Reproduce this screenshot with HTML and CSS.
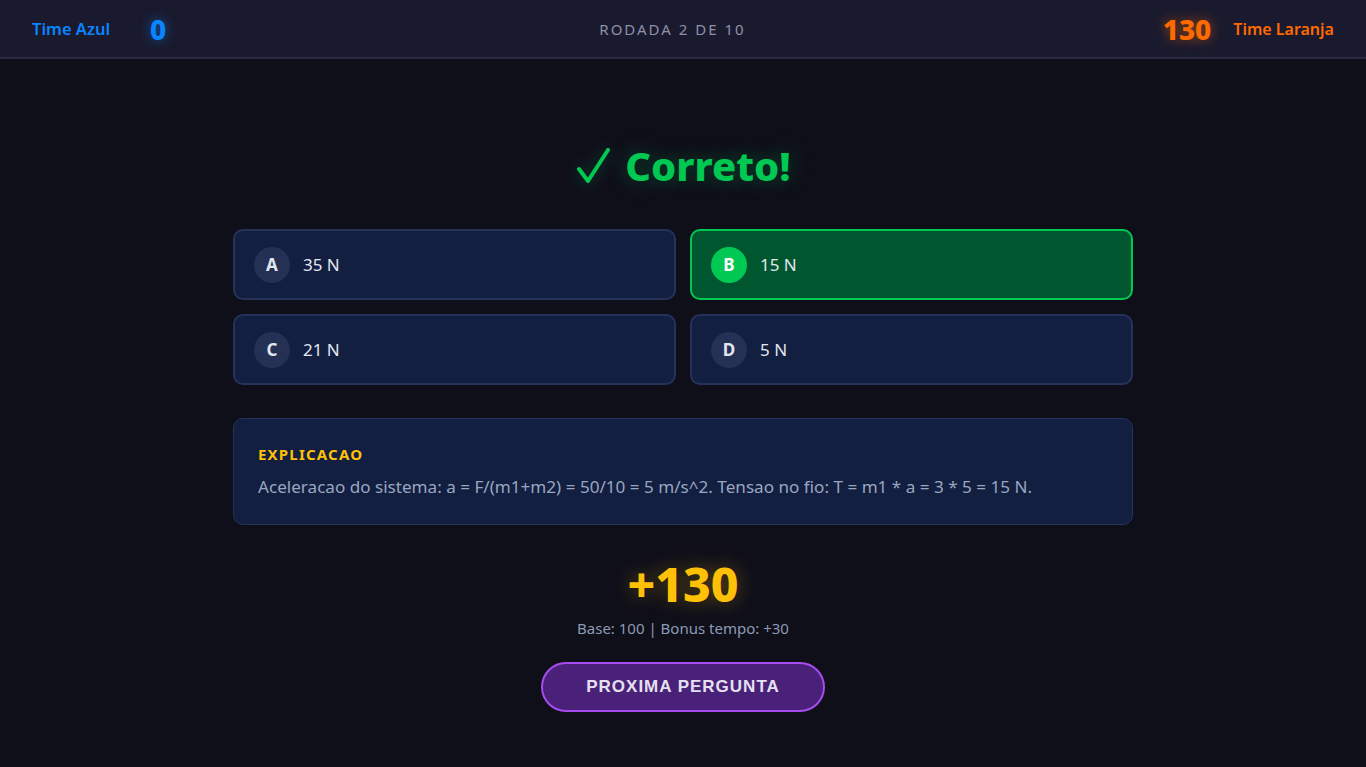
FILE: index.html
```html
<!DOCTYPE html>
<html lang="pt">
<head>
    <meta charset="UTF-8">
    <meta name="viewport" content="width=device-width, initial-scale=1.0">
    <title>Quiz - Resultado</title>
    <link rel="stylesheet" href="styles.css">
</head>
<body>
    <header class="placar">
        <div class="time time-azul">
            <span class="time-nome">Time Azul</span>
            <span class="time-pontos">0</span>
        </div>
        <div class="rodada">RODADA 2 DE 10</div>
        <div class="time time-laranja">
            <span class="time-pontos">130</span>
            <span class="time-nome">Time Laranja</span>
        </div>
    </header>

    <main class="resultado">
        <h1 class="titulo">
            <svg class="check" width="36" height="38" viewBox="0 0 36 38">
                <path d="M4 23 L13 35 L33 4" fill="none" stroke="#00c853" stroke-width="4" stroke-linecap="round" stroke-linejoin="round"/>
            </svg>
            Correto!
        </h1>

        <section class="opcoes">
            <div class="opcao"><span class="letra">A</span><span>35 N</span></div>
            <div class="opcao correta"><span class="letra">B</span><span>15 N</span></div>
            <div class="opcao"><span class="letra">C</span><span>21 N</span></div>
            <div class="opcao"><span class="letra">D</span><span>5 N</span></div>
        </section>

        <section class="explicacao">
            <h2>EXPLICACAO</h2>
            <p>Aceleracao do sistema: a = F/(m1+m2) = 50/10 = 5 m/s^2. Tensao no fio: T = m1 * a = 3 * 5 = 15 N.</p>
        </section>

        <div class="ganho">+130</div>
        <div class="detalhe">Base: 100 | Bonus tempo: +30</div>

        <button class="proxima">PROXIMA PERGUNTA</button>
    </main>
</body>
</html>
```

FILE: styles.css
```css
body {
    font-family: "Noto Sans", "Open Sans", sans-serif;
    margin: 0;
    background-color: #0f0f1a;
    color: #e2e6f0;
    min-height: 100vh;
}
.placar {
    display: flex;
    justify-content: space-between;
    align-items: center;
    height: 57px;
    padding: 0 32px;
    background-color: #1a1a2e;
    border-bottom: 2px solid #2a2a48;
}
.time {
    display: flex;
    align-items: center;
    gap: 24px;
}
.time-nome {
    font-size: 16.5px;
    font-weight: 600;
}
.time-pontos {
    min-width: 48px;
    text-align: center;
    font-size: 28px;
    font-weight: 800;
}
.time-azul {
    color: #0a84ff;
}
.time-azul .time-pontos {
    text-shadow: 0 0 12px rgba(10,132,255,0.6);
}
.time-laranja {
    color: #ff6a00;
    gap: 22px;
}
.time-laranja .time-nome {
    font-size: 16px;
}
.time-laranja .time-pontos {
    text-shadow: 0 0 12px rgba(255,106,0,0.6);
}
.rodada {
    font-size: 15px;
    letter-spacing: 2px;
    color: #8d91a8;
}
.resultado {
    width: 900px;
    margin: 0 auto;
    padding-top: 81px;
    display: flex;
    flex-direction: column;
    align-items: center;
}
.titulo {
    display: flex;
    align-items: center;
    gap: 14px;
    margin: 0 0 37px;
    font-size: 40px;
    font-weight: 800;
    line-height: 52px;
    color: #00c853;
    text-shadow: 0 0 20px rgba(0,200,83,0.35);
}
.check {
    margin-top: -2px;
    filter: drop-shadow(0 0 8px rgba(0,200,83,0.35));
}
.opcoes {
    width: 100%;
    display: grid;
    grid-template-columns: 1fr 1fr;
    gap: 14px;
}
.opcao {
    display: flex;
    align-items: center;
    gap: 13px;
    height: 67px;
    padding: 0 19px;
    background-color: #121f40;
    border: 2px solid #25325a;
    border-radius: 10px;
    font-size: 17px;
    color: #e2e6f0;
}
.letra {
    width: 36px;
    height: 36px;
    border-radius: 50%;
    background-color: #243154;
    display: flex;
    justify-content: center;
    align-items: center;
    font-weight: 700;
    font-size: 17px;
}
.correta {
    background-color: #00572f;
    border-color: #00c853;
}
.correta .letra {
    background-color: #00c853;
    color: #fff;
}
.explicacao {
    width: 100%;
    box-sizing: border-box;
    margin-top: 33px;
    padding: 25px 24px 24px;
    background-color: #121f40;
    border: 1px solid #25325a;
    border-radius: 10px;
}
.explicacao h2 {
    margin: 0 0 9px;
    font-size: 15px;
    font-weight: 700;
    letter-spacing: 1.2px;
    color: #ffc107;
}
.explicacao p {
    margin: 0;
    font-size: 17.1px;
    line-height: 27px;
    color: #9aa6c0;
}
.ganho {
    margin-top: 28px;
    font-size: 48px;
    font-weight: 800;
    line-height: 62px;
    color: #ffc107;
    text-shadow: 0 0 20px rgba(255,193,7,0.35);
}
.detalhe {
    margin-top: 3px;
    font-size: 15px;
    color: #8d9ab5;
}
.proxima {
    margin-top: 24px;
    width: 284px;
    height: 50px;
    background-color: #4a2178;
    color: #e4e0f0;
    border: 2px solid #a64cf0;
    border-radius: 25px;
    font-family: "Liberation Sans", Arial, sans-serif;
    font-size: 17px;
    font-weight: 700;
    letter-spacing: 1px;
    cursor: pointer;
}
```
